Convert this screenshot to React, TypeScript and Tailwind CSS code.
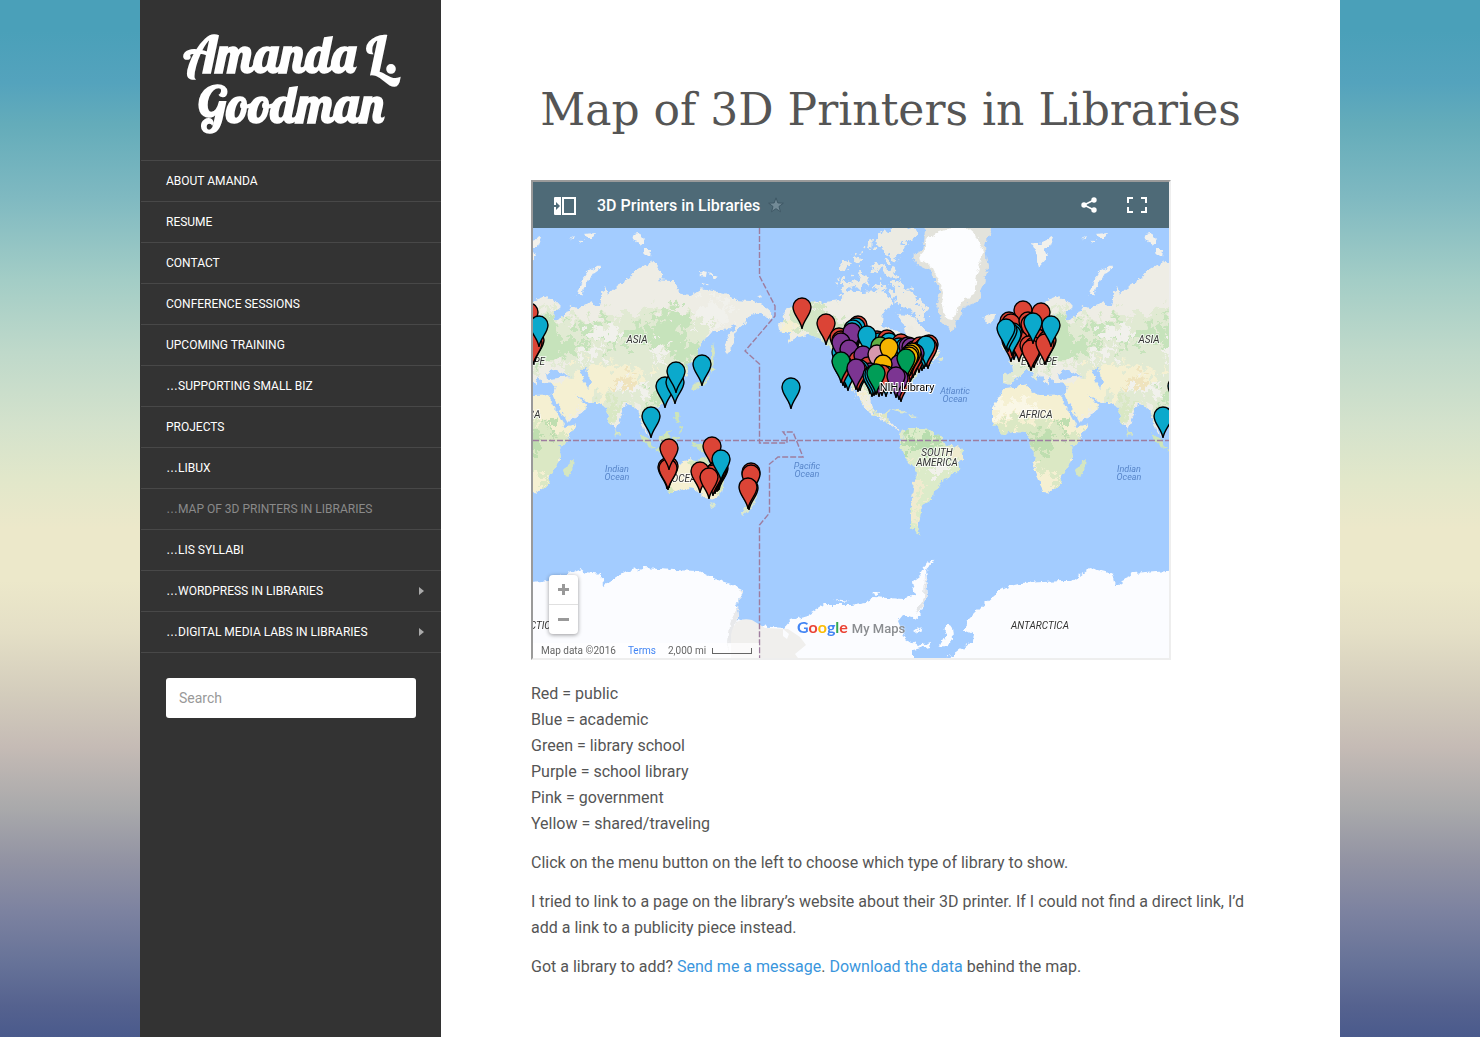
import React from "react";

type Pin = [number, number, string];

const RED = "#db4436";
const BLUE = "#0ba9cc";
const PURPLE = "#7c3592";
const GREEN = "#009d57";
const YELLOW = "#f4b400";
const PINK = "#d698ad";
const OLIVE = "#62af44";

const navItems: { label: string; dots?: boolean; current?: boolean; sub?: boolean }[] = [
  { label: "About Amanda" },
  { label: "Resume" },
  { label: "Contact" },
  { label: "Conference Sessions" },
  { label: "Upcoming Training" },
  { label: "Supporting Small Biz", dots: true },
  { label: "Projects" },
  { label: "LibUX", dots: true },
  { label: "Map of 3D Printers in Libraries", dots: true, current: true },
  { label: "LIS Syllabi", dots: true },
  { label: "WordPress in Libraries", dots: true, sub: true },
  { label: "Digital Media Labs in Libraries", dots: true, sub: true },
];

/* Pins of Europe and Asia; they repeat once per turn of the world. */
const easternPins: Pin[] = [
  [1023, 310, RED], [1041, 312, RED], [1009, 321, RED], [1011, 323, RED],
  [1018, 336, RED], [1014, 338, RED], [1011, 340, RED], [1028, 321, RED], [1030, 324, RED],
  [1037, 338, RED], [1047, 340, RED], [1019, 340, RED], [1029, 345, RED],
  [1034, 346, RED], [1031, 349, RED], [1013, 332, BLUE], [1012, 334, BLUE],
  [1008, 330, BLUE], [1006, 328, BLUE], [1033, 322, BLUE], [1045, 343, RED],
  [1051, 325, BLUE], [1214, 364, BLUE], [1177, 386, BLUE], [1187, 382, BLUE],
  [1188, 371, BLUE], [1163, 416, BLUE],
];

const pins: Pin[] = [
  [802, 307, RED], [826, 323, RED], [791, 387, BLUE],
  [669, 466, RED], [667, 467, RED], [668, 468, RED], [669, 448, RED],
  [712, 446, RED], [719, 468, RED], [718, 469, RED],
  [717, 470, RED], [715, 472, RED], [713, 474, RED], [700, 471, RED], [709, 477, RED], [721, 459, BLUE],
  [751, 472, RED], [751, 474, RED], [749, 488, RED], [748, 487, RED],
  [839, 337, RED], [841, 340, RED], [858, 325, RED], [856, 327, BLUE], [853, 329, BLUE],
  [843, 348, BLUE], [841, 352, BLUE], [845, 366, BLUE], [848, 369, BLUE],
  [852, 332, PURPLE], [877, 340, RED], [874, 342, RED], [879, 342, BLUE], [867, 335, BLUE],
  [887, 339, RED], [889, 342, BLUE], [901, 343, RED], [899, 347, BLUE],
  [905, 347, BLUE], [908, 346, PURPLE], [911, 347, PURPLE], [914, 350, PURPLE],
  [920, 346, RED], [929, 344, RED], [928, 347, RED], [922, 349, BLUE], [919, 351, RED], [924, 347, BLUE], [926, 345, BLUE],
  [908, 366, BLUE], [905, 370, RED],
  [915, 353, PURPLE], [913, 356, RED], [841, 342, PURPLE], [849, 349, PURPLE],
  [858, 360, RED], [863, 355, PURPLE], [868, 366, RED], [880, 346, OLIVE],
  [877, 354, PINK], [889, 347, YELLOW], [886, 370, RED], [891, 372, BLUE],
  [903, 362, RED], [899, 364, PURPLE], [912, 352, YELLOW], [910, 354, YELLOW], [909, 356, YELLOW],
  [870, 372, PURPLE], [883, 364, YELLOW], [906, 358, GREEN], [843, 364, RED], [841, 361, GREEN],
  [860, 369, BLUE], [858, 370, RED], [856, 368, PURPLE], [886, 375, BLUE], [879, 375, PURPLE], [882, 374, RED],
  [872, 375, BLUE], [874, 374, BLUE], [876, 373, GREEN], [901, 380, RED], [899, 378, PURPLE], [896, 376, PURPLE],
];

function MapPin({ pin }: { pin: Pin }) {
  return (
    <path
      d="M0 22C-1 13-9 8-9 0A9 9 0 0 1 9 0C9 8 1 13 0 22Z"
      transform={`translate(${pin[0]} ${pin[1]})`}
      fill={pin[2]}
      stroke="#000"
      strokeWidth="1.4"
    />
  );
}

function Label({ x, y, children }: { x: number; y: number; children: string }) {
  return (
    <text x={x} y={y} textAnchor="middle" fontSize="10" fontStyle="italic" fill="#333" stroke="#fff" strokeWidth="2" strokeOpacity=".7" paintOrder="stroke">
      {children}
    </text>
  );
}

function Ocean({ x, y, name }: { x: number; y: number; name: string }) {
  return (
    <text textAnchor="middle" fontSize="9" fontStyle="italic" fill="#5785c9">
      <tspan x={x} y={y}>{name}</tspan>
      <tspan x={x} y={y + 8}>Ocean</tspan>
    </text>
  );
}

function WorldMap() {
  return (
    <svg viewBox="533 228 636 430" className="block w-full" fontFamily="Roboto, sans-serif" role="img" aria-label="World map of 3D printers in libraries">
      <defs>
        <filter id="coast" x="-5%" y="-5%" width="110%" height="110%">
          <feTurbulence type="fractalNoise" baseFrequency=".16" numOctaves="3" seed="4" />
          <feDisplacementMap in="SourceGraphic" scale="7" xChannelSelector="R" yChannelSelector="G" />
        </filter>
        <filter id="islands" x="-5%" y="-5%" width="110%" height="110%">
          <feTurbulence type="fractalNoise" baseFrequency=".13" numOctaves="4" seed="12" />
          <feDisplacementMap in="SourceGraphic" scale="20" xChannelSelector="R" yChannelSelector="G" />
        </filter>
        <filter id="patch" x="-20%" y="-20%" width="140%" height="140%">
          <feTurbulence type="fractalNoise" baseFrequency=".12" numOctaves="4" seed="9" />
          <feDisplacementMap in="SourceGraphic" scale="36" xChannelSelector="R" yChannelSelector="G" />
          <feGaussianBlur stdDeviation=".5" />
        </filter>
        <path id="eurasia-shape" d="M491 383V373L501 372L500 365L496 361L506 358L513 353L518 343L521 348L528 351L538 345V338L546 334L535 332L538 321L545 315L536 319L530 328L529 338L523 341L515 335L511 325L525 311L535 300L546 296L555 300L562 308L552 312L555 320L565 315L571 306L578 308L591 303L600 306L601 295L605 285L608 295L615 288L626 281L635 271L648 263L654 261L664 275L658 280L674 281L679 293L689 296L701 288L724 293L738 300L754 301L764 306L774 315L769 320L761 313L751 315L744 325L734 333L735 341L728 355L725 348L728 338L736 325L723 331L713 331L698 348V360L688 365V376L683 378L679 371L671 371L675 385L669 398L658 408L651 408L655 420L648 424L645 418L643 422L650 438L644 430L638 410L631 405L626 404L616 431L609 421L606 409L598 403L588 403L576 394L587 407L583 414L566 423L552 398L556 385L541 382L538 376L535 386L527 374L525 381L518 371L511 371L505 378L500 385Z" />
        <path id="africa-shape" d="M493 388L515 385L520 393L528 396L551 395L558 412L566 426L577 424L568 438L560 448L561 461L551 473L548 485L538 493L531 492L525 475L521 465L523 455L518 445L515 433L501 432L491 434L480 423V408Z" />
        <path id="australia-shape" d="M668 473L678 465L688 459L696 460L700 468L706 456L713 468L724 481L722 493L713 500L703 496L696 489L684 488L669 493Z" />
        <path id="america-shape" d="M779 331L778 324L785 320L783 311L792 308L798 298L818 303L838 300L850 288L862 293L883 291L893 301L883 315L882 325L897 331L903 338L905 328L898 315L911 316L922 326L933 338L940 350L937 358L930 363L920 371L913 381L900 389L902 401L897 391L880 393L870 398L873 411L883 415L890 408L887 418L897 428L903 434L887 423L863 408L857 391L852 390L861 406L850 385L841 378L833 351L824 341L811 335L798 337L788 345L791 335Z" />
        <path id="south-shape" d="M907 428L927 428L940 436L945 443L965 450L962 458L957 473L945 478L938 490L933 493L932 500L922 506L920 518L917 528L921 535L910 528V515L913 491L915 468L905 458L900 446Z" />
        <clipPath id="eurasia-clip"><use href="#eurasia-shape" /></clipPath>
        <clipPath id="africa-clip"><use href="#africa-shape" /></clipPath>
        <clipPath id="america-clip"><use href="#america-shape" /></clipPath>
        <clipPath id="south-clip"><use href="#south-shape" /></clipPath>

        <g id="old-world" filter="url(#coast)">
          <g clipPath="url(#eurasia-clip)">
            <use href="#eurasia-shape" fill="#eeede5" />
            <g filter="url(#patch)">
              <path d="M485 390L510 325L545 305L570 320L610 315L650 308L680 312L705 320L715 340L700 375L680 410L655 440L630 400L600 425L560 360Z" fill="#e1ead3" />
              <path d="M505 360L530 345L545 315L560 320L555 340L590 340L575 355L540 362Z" fill="#c6e3bb" />
              <path d="M570 325L600 318L612 330L590 338ZM610 330L650 325L660 340L630 345ZM655 315L680 305L692 325L675 345L650 350ZM670 340L700 345L690 365L675 360ZM650 390L672 385L668 402L650 405ZM600 335L615 340L610 355Z" fill="#c6e3bb" />
              <path d="M572 372L600 362L640 372L655 365L640 385L605 392L590 408L560 425L548 392Z" fill="#f5f0d2" />
              <path d="M590 330L610 325L625 338L600 342ZM628 375L650 385L645 398L620 390ZM700 300L735 303L725 325L700 325ZM580 350L600 348L604 356L585 358ZM655 345L668 352L660 362L650 355Z" fill="#f1f1ec" />
              <path d="M612 383L632 376L640 382L622 388Z" fill="#efe3bd" />
              <path d="M606 395L620 400L616 425L608 415Z" fill="#d9e8c4" />
            </g>
          </g>
          <g clipPath="url(#africa-clip)">
            <use href="#africa-shape" fill="#f5f0d2" />
            <g filter="url(#patch)">
              <path d="M478 424L505 418L540 420L556 430L570 432L560 475L545 482L518 460L510 435L480 438Z" fill="#dbe8c4" />
              <path d="M516 430L540 432L543 448L524 455ZM545 425L557 422L554 436Z" fill="#bfdeb0" />
              <path d="M478 402L500 398L530 405L520 415L480 415Z" fill="#faf7e6" />
            </g>
          </g>
          <path d="M552 393L567 424L565 428L549 397Z" fill="#a3ccff" />
          <path d="M547 374L553 369L560 372L570 376L557 378L548 379ZM581 371L587 367L588 375L592 382L588 388L583 380Z" fill="#a3ccff" />
          <path d="M497 354L503 353L502 342L497 333L495 341L499 346ZM490 350L495 350L494 344L490 345Z" fill="#e5eada" />
          <path d="M578 291L582 280L590 270L600 265L600 269L590 276L584 287L582 297L577 295ZM519 243L528 243L539 238L541 245L533 249L536 256L527 266L525 255ZM568 239L575 236L573 240ZM584 234L596 233L593 237L587 237ZM579 240L584 239L580 243ZM632 234L640 233L645 244L640 246ZM645 250L651 250L650 258L644 252ZM699 270L707 272L706 277L700 276ZM710 273L717 276L713 278ZM703 283L708 284L705 286ZM757 295L763 294L761 297Z" fill="#f2f1ec" />
          <path d="M569 463L574 460L571 474L566 478L564 470ZM616 430L620 434L617 437ZM690 388L694 384L707 380L710 371L706 369L709 365L715 369L709 373L710 381L702 385L693 391ZM711 366V352L713 342L715 354L713 366ZM672 403L675 400L674 405Z" fill="#d5e6c0" />
          <path d="M639 432L645 437L656 448L651 447L643 440ZM655 449L667 451L674 452L670 454L656 451ZM659 439L665 433L671 430L668 444L661 445ZM672 437L680 436L676 443L678 449L673 446ZM675 413L679 412L680 423L674 418ZM679 426L684 429L681 432ZM690 441L698 444L711 447L720 453L712 455L702 452Z" fill="#cde5b9" />
        </g>
        <g id="new-world">
          <g filter="url(#coast)">
            <g clipPath="url(#america-clip)">
              <use href="#america-shape" fill="#eeede5" />
              <g filter="url(#patch)">
                <path d="M785 308L820 305L840 320L870 335L895 340L940 348L925 372L895 398L870 392L840 385L810 332L790 330Z" fill="#d3e6c5" />
                <path d="M838 360L860 355L868 385L858 398Z" fill="#f3ecd0" />
                <path d="M870 405L895 405L895 420L880 418Z" fill="#dfe7c3" />
                <path d="M779 330L790 318L798 330L784 345ZM855 385L868 400L870 412Z" fill="#f5f0d2" />
              </g>
            </g>
            <g clipPath="url(#south-clip)">
              <use href="#south-shape" fill="#dcebc9" />
              <g filter="url(#patch)">
                <path d="M902 433L925 432L940 442L933 455L910 455Z" fill="#b8ddae" />
                <path d="M948 443L968 448L960 460L948 455ZM912 480L922 475L922 510L914 530L908 520ZM903 455L912 465L910 475Z" fill="#f0ebcf" />
                <path d="M935 462L955 462L945 475L930 475Z" fill="#f1f1ea" />
              </g>
            </g>
            <path d="M899 435L905 429L905 434L902 440ZM889 408L900 409L908 413L900 412ZM909 415L918 416L913 418ZM937 361L944 357L941 362ZM930 352L936 349L938 354Z" fill="#dfe9cc" />
            <path d="M983 318L988 314L995 315L994 320L987 323Z" fill="#eeede5" />
          </g>
          <path filter="url(#islands)" d="M838 265L846 261L852 264L847 270L841 268ZM838 283L843 278L850 281L856 287L846 293L839 290ZM852 256L862 253L866 260L858 263ZM864 242L873 241L872 250L866 248ZM850 280L857 274L866 276L870 285L858 287ZM878 241L884 230L895 228L920 224L912 238L904 246L900 258L891 261L886 252L879 250ZM870 268L880 262L888 266L894 269L900 276L891 278L883 272ZM874 286L880 282L884 288L878 294ZM888 285L899 282L907 289L913 293L919 300L925 310L926 318L918 321L915 313L906 312L903 306L897 304L892 296ZM906 333L913 328L919 333L916 338L908 337Z" fill="#ecebe3" />
          <g filter="url(#coast)">
            <path d="M913 256L922 250L924 241L926 224L995 224L986 240L985 248L988 268L982 291L977 302L964 307L957 321L952 333L942 321L937 305L940 291L930 271L917 265Z" fill="#e3e3dc" />
            <path d="M925 251L925 240L936 233L962 224L976 236L983 252L977 275L974 295L960 303L953 320L944 318L942 305L943 290L933 268L919 258Z" fill="#fcfdff" />
          </g>
        </g>
        <g id="eastern-pins">
          {easternPins.map((p, i) => <MapPin key={i} pin={p} />)}
        </g>
      </defs>

      <rect x="533" y="228" width="636" height="430" fill="#a3ccff" />
      <use href="#old-world" />
      <use href="#old-world" x="512" />
      <g filter="url(#coast)">
        <use href="#australia-shape" fill="#f5f0d2" />
        <path d="M688 461L698 460L706 457L715 470L724 482L720 496L715 490L714 476L703 470L690 468ZM668 482L673 490L669 493Z" fill="#d3e6bd" />
        <path d="M710 504L715 505L713 509ZM749 499L756 501L750 510L743 516L741 514ZM753 490L757 499L751 501L749 496Z" fill="#dbe8cd" />
      </g>
      <use href="#new-world" />
      <g filter="url(#coast)">
        <path d="M525 584L548 581L581 568L586 572L601 574L603 586L611 581L628 571L644 568L674 570L698 571L718 580L734 585L744 590L736 605L738 618L758 626L784 628L791 620L808 615L824 605L851 605L870 601L873 596L903 598L915 595L912 581L920 575L925 565L935 558L925 571L928 595L918 618L903 615L898 621L905 638L917 646L930 642L929 646L913 650V665H525Z" fill="#fbfcff" />
        <path d="M935 665L963 648L972 641L973 634L964 630L967 621L980 608L1000 591L1010 586L1023 583L1063 581L1072 581L1090 568L1113 574L1116 586L1133 573L1180 569V665Z" fill="#fbfcff" />
        <path d="M945 627Q949 622 952 628L953 639Q949 646 939 647L944 638ZM914 632L921 627L917 634ZM834 599L850 601L842 602ZM871 592L879 592L875 594Z" fill="#fbfcff" />
        <path d="M739 589L744 590L737 605L738 618L732 640L727 652L730 625L737 606L742 596Z" fill="#e8e9eb" />
        <path d="M925 575L928 595L922 608L915 613L924 598Z" fill="#e3e5e8" />
      </g>
      <path d="M731 635Q734 616 752 620L765 628L788 629L800 637L806 645L795 654L798 658H731Z" fill="#f0efed" />
      <path d="M783 629L789 634L787 639L783 636ZM806 633L815 638L810 641Z" fill="#fbfcff" />

      <path
        d="M533 440.500H1169M759.500 228V276L775 306V316L745 351L759.500 364V443H787V437L783 432H793L803 457H778L769.500 464V513L759.500 525V658"
        fill="none"
        stroke="#9e7d9f"
        strokeWidth="1.4"
        strokeDasharray="6 2"
      />

      <Label x={637} y={343}>ASIA</Label>
      <Label x={1149} y={343}>ASIA</Label>
      <Label x={1039} y={365}>EUROPE</Label>
      <Label x={527} y={365}>EUROPE</Label>
      <Label x={1036} y={418}>AFRICA</Label>
      <Label x={524} y={418}>AFRICA</Label>
      <Label x={692} y={482}>OCEANIA</Label>
      <Label x={937} y={456}>SOUTH</Label>
      <Label x={937} y={466}>AMERICA</Label>
      <Label x={1040} y={629}>ANTARCTICA</Label>
      <Label x={528} y={629}>ANTARCTICA</Label>
      <Ocean x={617} y={472} name="Indian" />
      <Ocean x={1129} y={472} name="Indian" />
      <Ocean x={807} y={469} name="Pacific" />
      <Ocean x={955} y={394} name="Atlantic" />

      <use href="#eastern-pins" x="-512" />
      <use href="#eastern-pins" />
      {pins.map((p, i) => <MapPin key={i} pin={p} />)}

      <text x="907" y="391" textAnchor="middle" fontSize="11" fill="#000" stroke="#fff" strokeWidth="2" paintOrder="stroke">NIH Library</text>
    </svg>
  );
}

function MapHeader() {
  return (
    <header className="flex h-[46px] items-center bg-[#4e6a77] pr-[22px] pl-[21px] text-white">
      <button type="button" aria-label="Toggle legend" className="mr-[21px] pt-px">
        <svg width="22" height="18" viewBox="0 0 22 18" className="block">
          <path d="M1 0H7V18H1Q0 18 0 17V1Q0 0 1 0Z" fill="#fff" />
          <path d="M0 8H2V5L6 9L2 13V10H0Z" fill="#4e6a77" />
          <path d="M9 1H21V17H9Z" fill="none" stroke="#fff" strokeWidth="2" />
        </svg>
      </button>
      <h2 className="pt-0.5 text-base font-medium">3D Printers in Libraries</h2>
      <button type="button" aria-label="Star this map" className="ml-2">
        <svg width="16" height="16" viewBox="0 0 14 14" className="block">
          <path d="M7 .8L8.600 5.200L13.400 5.400L9.600 8.300L10.900 12.900L7 10.200L3.100 12.900L4.400 8.300L.6 5.400L5.400 5.200Z" fill="#728a96" stroke="#3c5562" strokeWidth=".8" />
        </svg>
      </button>
      <button type="button" aria-label="Share" className="ml-auto">
        <svg width="16" height="16" viewBox="0 0 16 16" className="block" fill="#fff">
          <path d="M13 3L3 8L13 13" fill="none" stroke="#fff" strokeWidth="1.600" />
          <circle cx="13" cy="3" r="2.700" /><circle cx="3" cy="8" r="2.700" /><circle cx="13" cy="13" r="2.700" />
        </svg>
      </button>
      <button type="button" aria-label="Full screen" className="ml-[30px]">
        <svg width="20" height="16" viewBox="0 0 20 16" className="block" fill="none" stroke="#fff" strokeWidth="2">
          <path d="M1 6V1H6M14 1H19V6M19 10V15H14M6 15H1V10" />
        </svg>
      </button>
    </header>
  );
}

function MapFrame() {
  return (
    <section className="w-full max-w-[640px] border-2 border-t-[#9a9a9a] border-r-[#eeeeee] border-b-[#eeeeee] border-l-[#9a9a9a]">
      <MapHeader />
      <div className="relative overflow-hidden">
        <WorldMap />
        <div className="absolute bottom-6 left-4 flex w-[29px] flex-col divide-y divide-[#e0e0e0] rounded-sm bg-white shadow-[0_1px_4px_rgba(0,0,0,0.4)]">
          <button type="button" aria-label="Zoom in" className="flex h-[30px] items-center justify-center">
            <svg width="11" height="11" viewBox="0 0 11 11" fill="#999"><path d="M4 0H7V4H11V7H7V11H4V7H0V4H4Z" /></svg>
          </button>
          <button type="button" aria-label="Zoom out" className="flex h-[29px] items-center justify-center">
            <svg width="11" height="11" viewBox="0 0 11 11" fill="#999"><path d="M0 4H11V7H0Z" /></svg>
          </button>
        </div>
        <div className="absolute bottom-[17px] left-[264px] flex items-baseline leading-6 whitespace-nowrap [text-shadow:0_0_2px_#fff]">
          <span className="font-['Lato',sans-serif] text-base font-bold text-[#4285f4]">
            G<span className="text-[#ea4335]">o</span><span className="text-[#fbbc05]">o</span>g<span className="text-[#34a853]">l</span><span className="text-[#ea4335]">e</span>
          </span>
          <span className="ml-1 text-[13px] font-medium text-[#8a8d91]">My Maps</span>
        </div>
        <div className="absolute bottom-0 left-0 flex h-[15px] items-center bg-white/70 pr-[7px] pl-2 text-[10px] text-[#666]">
          <span>Map data ©2016</span>
          <a href="#terms" className="ml-3 text-[#4285f4]">Terms</a>
          <span className="ml-3">2,000 mi</span>
          <span className="ml-1.5 h-[6px] w-10 border border-t-0 border-[#666]" />
        </div>
      </div>
    </section>
  );
}

export default function App() {
  return (
    <div className="min-h-screen bg-[linear-gradient(to_bottom,#4aa0b9_0%,#4aa0b9_3%,#54a3bd_8%,#64acba_12%,#7fb9c1_19%,#a3cdc6_27%,#bfd9ca_34%,#d4e2cc_41%,#e1e7ca_46%,#ece8ca_51%,#ece8ca_56%,#e4dfc6_61%,#d3ccbc_67%,#c5bbb5_72%,#a9a9ab_78%,#9293a3_83%,#7c82a0_88%,#667298_93%,#55628f_97%,#4a5a8c_100%)] font-[Roboto,sans-serif] text-[#555]">
      <div className="mx-auto flex min-h-screen max-w-[1200px] bg-white">
        <aside className="w-[301px] shrink-0 bg-[#333] pl-px">
          <h1 className="px-6 py-[30px] text-center font-['Lobster','Liberation_Serif',serif] text-[50px] leading-[50px] font-bold text-white">
            <a href="#home">Amanda L. Goodman</a>
          </h1>
          <nav className="border-b border-[#484848]">
            <ul>
              {navItems.map((item) => (
                <li key={item.label} className="border-t border-[#484848]">
                  <a
                    href="#page"
                    aria-current={item.current ? "page" : undefined}
                    className={`flex h-10 items-center pr-[17px] pl-[25px] text-xs uppercase ${item.current ? "text-[#8a8a8a]" : "text-white"}`}
                  >
                    {item.dots && <span className="font-['Liberation_Sans',sans-serif]">…</span>}
                    <span>{item.label}</span>
                    {item.sub && (
                      <svg width="5" height="10" viewBox="0 0 5 10" className="ml-auto" fill="#aaa"><path d="M0 1L5 5L0 9Z" /></svg>
                    )}
                  </a>
                </li>
              ))}
            </ul>
          </nav>
          <form className="px-[25px] pt-[25px]">
            <input
              type="search"
              aria-label="Search"
              placeholder="Search"
              className="block h-10 w-full rounded-[3px] bg-white px-[13px] text-sm text-[#555] placeholder:text-[#999]"
            />
          </form>
        </aside>
        <main className="min-w-0 flex-1 px-[90px] pt-20 pb-14">
          <h1 className="mb-10 text-center font-['Roboto_Slab','DejaVu_Serif',serif] text-[44px] leading-[60px] whitespace-nowrap">
            Map of 3D Printers in Libraries
          </h1>
          <MapFrame />
          <div className="mt-[21px] space-y-[13px] text-base leading-[26px]">
            <p>
              Red = public<br />
              Blue = academic<br />
              Green = library school<br />
              Purple = school library<br />
              Pink = government<br />
              Yellow = shared/traveling
            </p>
            <p>Click on the menu button on the left to choose which type of library to show.</p>
            <p>
              I tried to link to a page on the library’s website about their 3D printer. If I could not find a direct link, I’d add a link to a publicity piece instead.
            </p>
            <p>
              Got a library to add? <a href="#message" className="text-[#3a96dd]">Send me a message</a>. <a href="#data" className="text-[#3a96dd]">Download the data</a> behind the map.
            </p>
          </div>
        </main>
      </div>
    </div>
  );
}
